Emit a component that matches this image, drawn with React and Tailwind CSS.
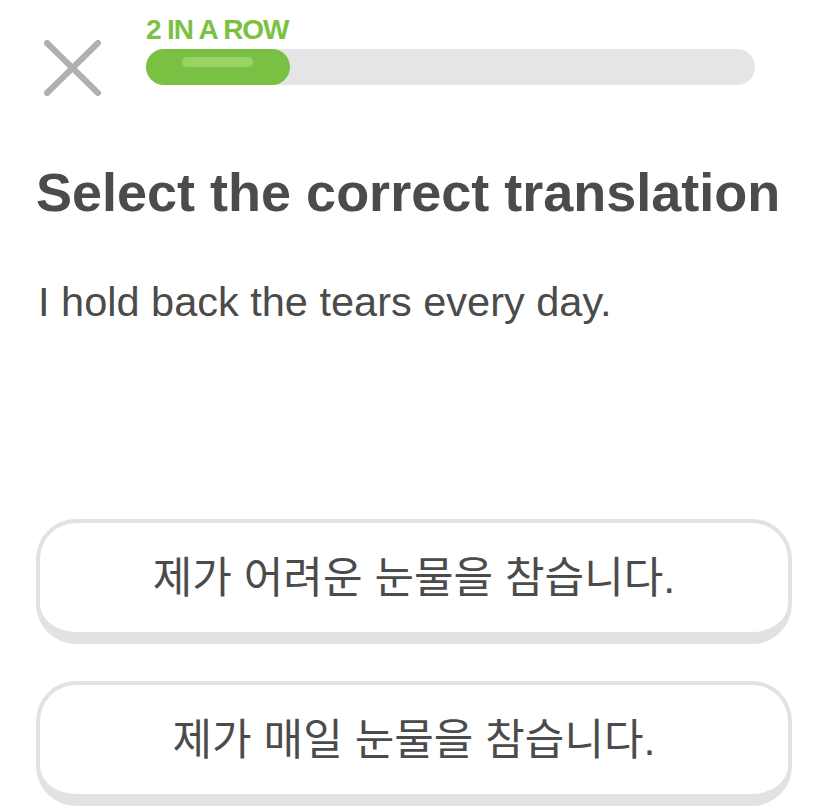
export default function App() {
  const sans = { fontFamily: '"Liberation Sans", "Noto Sans CJK KR", sans-serif' };
  return (
    <div className="w-[828px] h-[810px] bg-white overflow-hidden flex flex-col text-[#4b4b4b]" style={sans}>
      {/* header */}
      <div className="flex items-start pt-[15px]">
        <svg className="ml-[44px] mt-[25px] shrink-0" width="58" height="58" viewBox="0 0 58 58">
          <line x1="3" y1="3" x2="54" y2="53" stroke="#b0b0b0" strokeWidth="6" strokeLinecap="round" />
          <line x1="54" y1="3" x2="3" y2="53" stroke="#b0b0b0" strokeWidth="6" strokeLinecap="round" />
        </svg>
        <div className="ml-[44px] flex flex-col">
          <div className="text-[28px] leading-[30px] font-bold tracking-[-0.04em] text-[#7ac143]">2 IN A ROW</div>
          <div className="mt-[4px] w-[609px] h-[36px] rounded-full bg-[#e5e5e5]">
            <div className="relative w-[144px] h-[36px] rounded-full bg-[#7ac143]">
              <div className="absolute left-[36px] top-[8px] w-[71px] h-[10px] rounded-full bg-[#9ad266]" />
            </div>
          </div>
        </div>
      </div>

      {/* title */}
      <h1 className="mt-[64px] ml-[36px] text-[54px] leading-[60px] font-bold whitespace-nowrap">
        Select the correct translation
      </h1>

      {/* sentence */}
      <p className="mt-[56px] ml-[38px] text-[41.5px] leading-[48px] whitespace-nowrap">
        I hold back the tears every day.
      </p>

      {/* options */}
      <div className="mt-[193px] mx-[36px] flex flex-col gap-[37px]">
        <button className="h-[125px] w-full rounded-[40px] border-[4px] border-b-[12px] border-[#e2e2e2] bg-white flex items-center justify-center text-[43px] leading-[50px] text-[#4b4b4b]">
          제가 어려운 눈물을 참습니다.
        </button>
        <button className="h-[125px] w-full rounded-[40px] border-[4px] border-b-[12px] border-[#e2e2e2] bg-white flex items-center justify-center text-[43px] leading-[50px] text-[#4b4b4b]">
          제가 매일 눈물을 참습니다.
        </button>
      </div>
    </div>
  );
}
